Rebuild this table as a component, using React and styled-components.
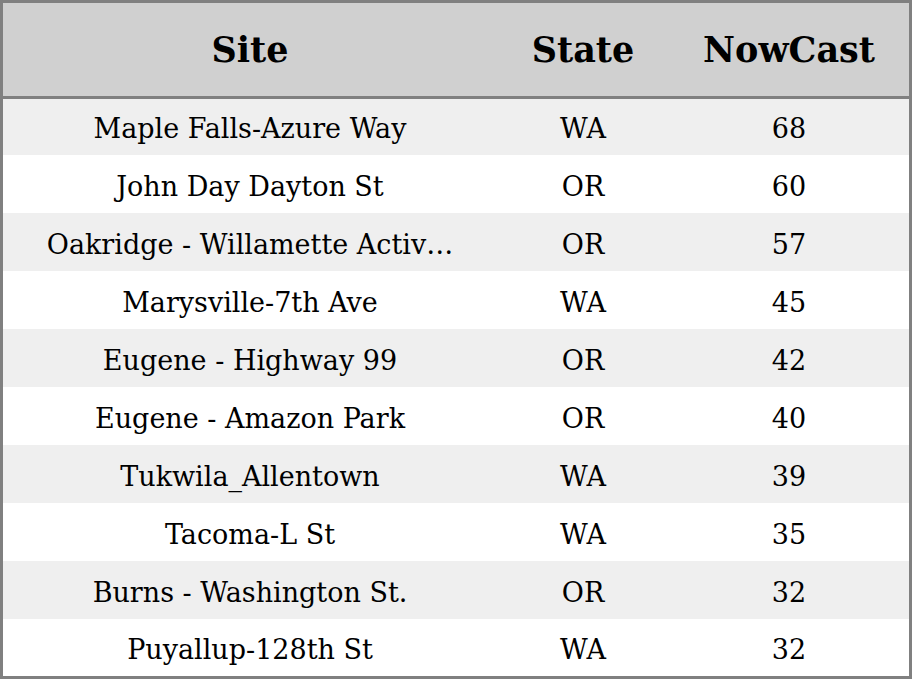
import React from "react"
import styled, { createGlobalStyle } from "styled-components"

const GlobalStyle = createGlobalStyle`
    html, body {
        margin: 0;
        padding: 0;
        background: #ffffff;
    }
    * {
        box-sizing: border-box;
    }
`

// site names longer than the column are shown already shortened
const rows = [
    { site: "Maple Falls-Azure Way", state: "WA", nowcast: 68 },
    { site: "John Day Dayton St", state: "OR", nowcast: 60 },
    { site: "Oakridge - Willamette Activ…", state: "OR", nowcast: 57 },
    { site: "Marysville-7th Ave", state: "WA", nowcast: 45 },
    { site: "Eugene - Highway 99", state: "OR", nowcast: 42 },
    { site: "Eugene - Amazon Park", state: "OR", nowcast: 40 },
    { site: "Tukwila_Allentown", state: "WA", nowcast: 39 },
    { site: "Tacoma-L St", state: "WA", nowcast: 35 },
    { site: "Burns - Washington St.", state: "OR", nowcast: 32 },
    { site: "Puyallup-128th St", state: "WA", nowcast: 32 },
]

const Table = styled.div`
    width: 912px;
    height: 679px;
    border: 3px solid #808080;
    display: flex;
    flex-direction: column;
    overflow: hidden;
    font-family: "DejaVu Serif", serif;
    color: #000;
`

const Row = styled.div`
    display: grid;
    grid-template-columns: 494px 172px 1fr;
    align-items: center;
    flex: 0 0 58px;
    padding-top: 4px;
    background: ${p => p.$striped ? "#efefef" : "#ffffff"};

    &:nth-child(2) {
        flex-basis: 56px;
        padding-top: 2px;
    }
    &:last-child {
        flex: 1 1 auto;
    }
`

const HeadRow = styled.div`
    display: grid;
    grid-template-columns: 494px 172px 1fr;
    align-items: center;
    flex: 0 0 96px;
    background: #d0d0d0;
    border-bottom: 3px solid #808080;
`

const HeadCell = styled.div`
    text-align: center;
    font-weight: bold;
    font-size: 35px;
`

const Cell = styled.div`
    text-align: center;
    font-size: 27px;
    white-space: nowrap;
`

export default function App() {
    return (
        <>
            <GlobalStyle />
            <Table>
                <HeadRow>
                    <HeadCell>Site</HeadCell>
                    <HeadCell>State</HeadCell>
                    <HeadCell>NowCast</HeadCell>
                </HeadRow>
                {
                    rows.map((r, i) => (
                        <Row key={i} $striped={i % 2 === 0}>
                            <Cell>{r.site}</Cell>
                            <Cell>{r.state}</Cell>
                            <Cell>{r.nowcast}</Cell>
                        </Row>
                    ))
                }
            </Table>
        </>
    )
}
